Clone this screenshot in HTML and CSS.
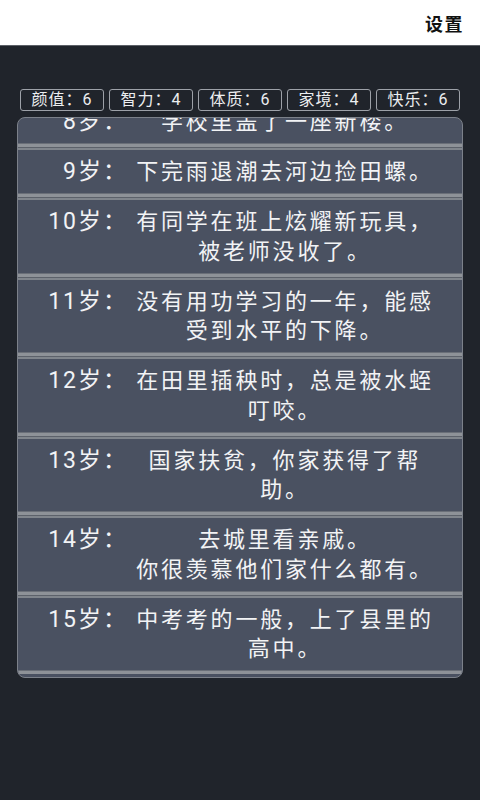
FILE: index.html
```html
<!DOCTYPE html>
<html lang="zh-CN">
<head>
<meta charset="utf-8">
<title>人生</title>
<link rel="stylesheet" href="styles.css">
</head>
<body>
<header class="topbar">
  <span class="settings">设置</span>
</header>
<main class="stage">
  <div class="stats">
    <div class="stat">颜值：6</div>
    <div class="stat">智力：4</div>
    <div class="stat">体质：6</div>
    <div class="stat">家境：4</div>
    <div class="stat">快乐：6</div>
  </div>
  <section class="panel">
    <div class="list">
      <div class="item"><div class="age">8岁：</div><div class="text">学校里盖了一座新楼。</div></div>
      <div class="sep"></div>
      <div class="item"><div class="age">9岁：</div><div class="text">下完雨退潮去河边捡田螺。</div></div>
      <div class="sep"></div>
      <div class="item"><div class="age">10岁：</div><div class="text">有同学在班上炫耀新玩具，被老师没收了。</div></div>
      <div class="sep"></div>
      <div class="item"><div class="age">11岁：</div><div class="text">没有用功学习的一年，能感受到水平的下降。</div></div>
      <div class="sep"></div>
      <div class="item"><div class="age">12岁：</div><div class="text">在田里插秧时，总是被水蛭叮咬。</div></div>
      <div class="sep"></div>
      <div class="item"><div class="age">13岁：</div><div class="text">国家扶贫，你家获得了帮助。</div></div>
      <div class="sep"></div>
      <div class="item"><div class="age">14岁：</div><div class="text">去城里看亲戚。<br>你很羡慕他们家什么都有。</div></div>
      <div class="sep"></div>
      <div class="item"><div class="age">15岁：</div><div class="text">中考考的一般，上了县里的高中。</div></div>
      <div class="sep last"></div>
    </div>
  </section>
</main>
</body>
</html>
```
FILE: styles.css
```css
html, body {
  margin: 0;
  padding: 0;
}
body {
  width: 480px;
  height: 800px;
  overflow: hidden;
  background: #20242b;
  font-family: Roboto, "Noto Sans CJK SC", sans-serif;
}
.topbar {
  height: 45px;
  background: #ffffff;
  border-bottom: 1px solid #5c6067;
  display: flex;
  align-items: center;
  justify-content: flex-end;
  padding-right: 16px;
}
.settings {
  font-family: "Noto Sans CJK SC", sans-serif;
  font-size: 18px;
  font-weight: 700;
  color: #111;
  letter-spacing: 1.5px;
}
.stage {
  padding: 43px 19px 0 17px;
}
.stats {
  display: flex;
  gap: 5px;
  margin-left: 3px;
  margin-bottom: 6px;
}
.stat {
  width: 84px;
  height: 22px;
  box-sizing: border-box;
  border: 1.5px solid #9da1a8;
  border-radius: 3px;
  color: #eceef0;
  font-family: Roboto, "Noto Sans CJK SC", sans-serif;
  font-size: 16px;
  letter-spacing: 1px;
  display: flex;
  align-items: center;
  justify-content: center;
  line-height: 1;
}
.panel {
  width: 446px;
  height: 561px;
  box-sizing: border-box;
  border: 1px solid #7c818a;
  border-radius: 8px;
  background: #4a5161;
  overflow: hidden;
}
.list {
  margin-top: -18px;
}
.item {
  display: flex;
  align-items: flex-start;
  padding: 7px 0 6.5px;
  color: #f2f3f5;
  font-size: 22px;
  line-height: 29.5px;
  letter-spacing: 2.8px;
}
.age {
  width: 110px;
  flex: none;
  text-align: right;
  font-size: 23px;
  letter-spacing: 2px;
}
.text {
  width: 306px;
  margin-left: 4px;
  flex: none;
  text-align: center;
}
.sep {
  height: 7px;
  background: linear-gradient(to bottom,
    #6a6f78 0, #6a6f78 1px,
    #8e9298 1px, #8e9298 4px,
    #5c616a 4px, #5c616a 5px,
    #80858c 5px, #80858c 7px);
}
.sep.last {
  height: 4px;
}
```
